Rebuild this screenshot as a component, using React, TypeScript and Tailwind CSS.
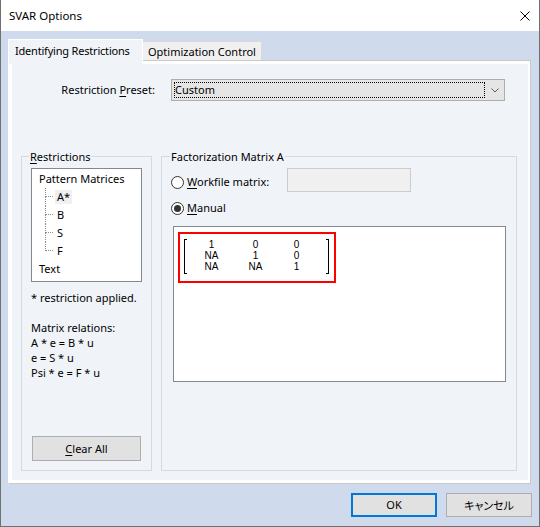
import React from "react";

function Radio({ checked }: { checked?: boolean }) {
  return (
    <div className="w-[13px] h-[13px] rounded-full border border-[#333333] bg-white flex items-center justify-center shrink-0">
      {checked ? <div className="w-[7px] h-[7px] rounded-full bg-[#333333]" /> : null}
    </div>
  );
}

function TreeChild({ label, last, selected }: { label: string; last?: boolean; selected?: boolean }) {
  return (
    <div className="flex h-[18px] ml-[13px]">
      <div className="w-[8px] flex flex-col shrink-0">
        <div className="h-[9px] border-l border-b border-dotted border-[#8a8a8a]" />
        <div className={last ? "flex-1" : "flex-1 border-l border-dotted border-[#8a8a8a]"} />
      </div>
      <div
        className={
          selected
            ? "ml-[2px] px-[2px] h-[14px] self-center flex items-center bg-[#f0f0f0]"
            : "ml-[2px] px-[2px] h-[14px] self-center flex items-center"
        }
      >
        {label}
      </div>
    </div>
  );
}

export default function App() {
  return (
    <div className="w-[540px] h-[527px] bg-[#cfdbec] border-l border-r border-b border-[#707070] flex flex-col font-['Noto_Sans',sans-serif] text-[11px] leading-[16px] text-black overflow-hidden">
      {/* Title bar */}
      <div className="h-[31px] shrink-0 bg-white flex items-center justify-between pl-[8px] pr-[9px]">
        <span className="text-[11.5px]">SVAR Options</span>
        <svg width="10" height="10" viewBox="0 0 10 10">
          <path d="M0.5 0.5 L9.5 9.5 M9.5 0.5 L0.5 9.5" stroke="#000000" strokeWidth="1" fill="none" />
        </svg>
      </div>

      {/* Body */}
      <div className="flex-1 flex flex-col pt-[8px]">
        {/* Tabs */}
        <div className="flex items-end h-[21px] ml-[7px]">
          <div className="relative z-10 h-[25px] mb-[-4px] w-[135px] bg-[#f0f4f9] border-l border-t border-r border-white pl-[6px] pt-[3px] tracking-[-0.2px]">
            Identifying Restrictions
          </div>
          <div className="h-[19px] w-[119px] bg-[#f0f0f0] border-t border-r border-[#d9d9d9] pl-[5px] pt-[2px]">
            Optimization Control
          </div>
        </div>

        {/* Tab panel */}
        <div className="ml-[7px] w-[523px] h-[424px] border-t border-r border-b border-[#c9c9c9] border-l border-l-white bg-white pl-[3px] pt-[3px] pr-[2px] pb-[3px]">
          <div className="h-full bg-[#f0f4f9] flex flex-col">
            {/* Preset row */}
            <div className="mt-[15px] h-[22px] flex items-center">
              <div className="w-[143px] text-right">
                Restriction <span className="underline underline-offset-[2px]">P</span>reset:
              </div>
              <div className="ml-[16px] w-[334px] h-[22px] bg-[#e5e5e5] border border-[#adadad] p-[2px] flex items-center">
                <div className="w-[311px] h-full border border-dotted border-black flex items-center">
                  Custom
                </div>
                <svg className="ml-[6px]" width="8" height="5" viewBox="0 0 8 5">
                  <path d="M0.5 0.5 L4 4 L7.5 0.5" stroke="#606060" strokeWidth="1" fill="none" />
                </svg>
              </div>
            </div>

            {/* Groups */}
            <div className="mt-[55px] ml-[9px] h-[315px] flex gap-[9px]">
              {/* Restrictions group */}
              <div className="w-[131px] border border-[#d5dae0] flex flex-col">
                <div className="-mt-[8px] ml-[7px] px-[1px] self-start bg-[#f0f4f9] leading-[16px]">
                  <span className="underline underline-offset-[2px]">R</span>estrictions
                </div>
                <div className="mt-[3px] ml-[9px] w-[111px] h-[114px] border border-[#828790] bg-white pt-[1px] flex flex-col">
                  <div className="h-[18px] flex items-center pl-[7px]">Pattern Matrices</div>
                  <TreeChild label="A*" selected />
                  <TreeChild label="B" />
                  <TreeChild label="S" />
                  <TreeChild label="F" last />
                  <div className="h-[18px] flex items-center pl-[7px]">Text</div>
                </div>
                <div className="mt-[8px] ml-[9px] leading-[15px]">
                  <div>* restriction applied.</div>
                  <div className="h-[15px]" />
                  <div>Matrix relations:</div>
                  <div>A * e = B * u</div>
                  <div>e = S * u</div>
                  <div>Psi * e = F * u</div>
                </div>
                <button className="mt-auto mb-[9px] ml-[10px] w-[109px] h-[25px] bg-[#e1e1e1] border border-[#adadad] flex items-center justify-center">
                  <span>
                    <span className="underline underline-offset-[2px]">C</span>lear All
                  </span>
                </button>
              </div>

              {/* Factorization group */}
              <div className="w-[356px] border border-[#d5dae0] flex flex-col">
                <div className="-mt-[8px] ml-[8px] px-[1px] self-start bg-[#f0f4f9] leading-[16px]">
                  Factorization Matrix A
                </div>
                <div className="mt-[3px] h-[24px] flex items-center">
                  <div className="flex items-center mt-[4px] ml-[9px]">
                    <Radio />
                    <span className="ml-[3px] w-[100px]">
                      <span className="underline underline-offset-[2px]">W</span>orkfile matrix:
                    </span>
                  </div>
                  <div className="w-[124px] h-[24px] bg-[#f0f0f0] border border-[#cccccc]" />
                </div>
                <div className="mt-[4px] h-[24px] flex items-center ml-[9px]">
                  <Radio checked />
                  <span className="ml-[3px]">
                    <span className="underline underline-offset-[2px]">M</span>anual
                  </span>
                </div>
                <div className="mt-[6px] ml-[11px] w-[333px] h-[156px] border border-[#828790] bg-white flex flex-col">
                  <div className="ml-[4px] mt-[5px] w-[158px] h-[51px] border-2 border-[#ff0000] flex items-start pl-[4px] pt-[5px] font-['Liberation_Sans',Arial,sans-serif] text-[10px] leading-[11px]">
                    <div className="w-[3px] h-[35px] border-l border-t border-b border-black shrink-0" />
                    <div className="grid grid-cols-[49px_39px_43px] text-center">
                      <div>1</div>
                      <div>0</div>
                      <div>0</div>
                      <div>NA</div>
                      <div>1</div>
                      <div>0</div>
                      <div>NA</div>
                      <div>NA</div>
                      <div>1</div>
                    </div>
                    <div className="ml-[8px] w-[3px] h-[35px] border-r border-t border-b border-black shrink-0" />
                  </div>
                </div>
              </div>
            </div>
          </div>
        </div>

        {/* Footer */}
        <div className="flex justify-end gap-[9px] pt-[9px] pr-[7px]">
          <button className="w-[86px] h-[24px] bg-[#e1e1e1] border-2 border-[#0078d7] flex items-center justify-center">
            OK
          </button>
          <button className="w-[86px] h-[24px] bg-[#e1e1e1] border border-[#adadad] flex items-center justify-center font-['Noto_Sans_CJK_JP','Noto_Sans',sans-serif] text-[11px] [font-feature-settings:'palt']">
            キャンセル
          </button>
        </div>
      </div>
    </div>
  );
}
